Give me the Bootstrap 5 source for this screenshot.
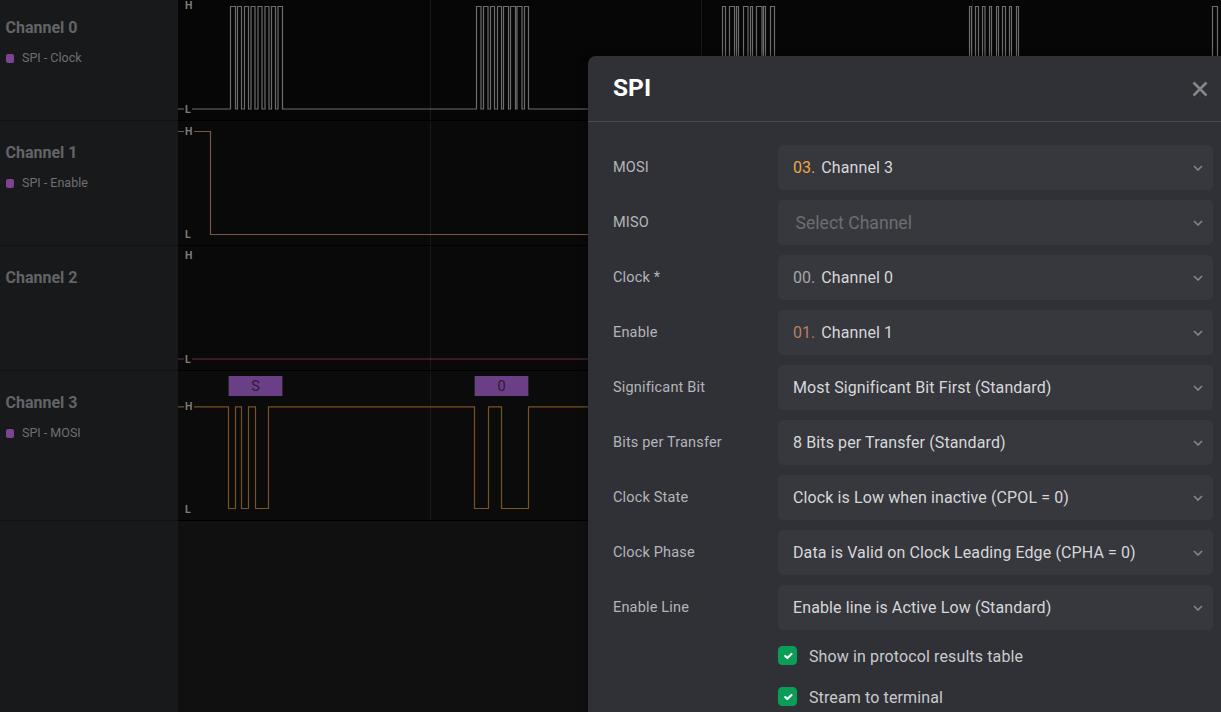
<!DOCTYPE html>
<html lang="en">
<head>
<meta charset="utf-8">
<title>SPI</title>
<link href="https://cdn.jsdelivr.net/npm/bootstrap@5.3.0/dist/css/bootstrap.min.css" rel="stylesheet">
<style>
html,body{height:712px;overflow:hidden}
body{background:#101010;font-family:Roboto,"Liberation Sans",sans-serif;color:#d0d1d3;position:relative}
.side-wrap{width:178px;flex:none;background:#18191b;height:712px}
.ch-row{height:125px;border-bottom:1px solid #111213;padding:22px 0 0 5.5px}
.ch-row.first{height:121px;padding-top:18px}
.ch-row.tall{height:150px}
.ch-name{font-size:16px;font-weight:700;line-height:20px;color:#636467}
.ch-sub{font-size:12.5px;line-height:16px;color:#6e6f72;margin-top:12px;gap:8px}
.ch-dot{width:8px;height:9px;border-radius:2px;background:#7b4391;flex:none;margin-left:.5px}
.chart-col{width:1043px;flex:none}
.chart-col svg{display:block}
.wave{fill:none;stroke-width:1.2}
.lv{font:700 10.5px Roboto,sans-serif;fill:#7c7c7c}
.tag{font:400 14.5px Roboto,sans-serif;fill:#2b1a36;text-anchor:middle}
.dlg{position:absolute;left:588px;top:56px;width:633px;height:656px;overflow:hidden;background:#303136;border-radius:8px 0 0 0;box-shadow:0 0 8px rgba(0,0,0,.4)}
.dlg-head{height:66px;border-bottom:1px solid #4b4c50;padding:0 25px}
.dlg-title{font-size:24.5px;font-weight:700;color:#fff;margin:0;line-height:1}
.dlg-close{background:none;border:0;padding:0;line-height:0;margin-right:-12px}
.dlg-body{padding:23px 8px 0 25px}
.fld{height:45px;margin-bottom:10px}
.fld-label{width:165px;flex:none;font-size:14.5px;letter-spacing:.17px;color:#b4b5b8;margin-top:1px}
.sel{width:435px;height:45px;background:#37383d;border-radius:5px;padding:0 10px 0 15px;font-size:16px;letter-spacing:.115px;color:#d6d7d9}
.sel .hint{color:#6c6d72;font-size:17.6px;letter-spacing:0;margin-left:2.5px;position:relative;top:1px}
.num{margin-right:6px;color:#a5a6a9;letter-spacing:0}
.num.c3{color:#eea647}
.num.c1{color:#b37f66}
.chk-row{margin-left:165px;height:19px;gap:12px;margin-bottom:22px;padding:0;min-height:0;font-size:16px;letter-spacing:.12px;color:#c9cacd}
.chk-row .form-check-input{float:none;margin:0;width:19px;height:19px;background-color:#0a9d58;border-color:#0a9d58;border-radius:4px;flex:none;background-size:14px}
.chk-row .form-check-label{line-height:19px;position:relative;top:1px}
</style>
</head>
<body>
<div class="d-flex">
  <div class="side-wrap">
    <div class="ch-row first">
      <div class="ch-name">Channel 0</div>
      <div class="ch-sub d-flex align-items-center"><span class="ch-dot"></span>SPI - Clock</div>
    </div>
    <div class="ch-row">
      <div class="ch-name">Channel 1</div>
      <div class="ch-sub d-flex align-items-center"><span class="ch-dot"></span>SPI - Enable</div>
    </div>
    <div class="ch-row">
      <div class="ch-name">Channel 2</div>
    </div>
    <div class="ch-row tall">
      <div class="ch-name">Channel 3</div>
      <div class="ch-sub d-flex align-items-center"><span class="ch-dot"></span>SPI - MOSI</div>
    </div>
  </div>
  <div class="chart-col">
    <svg width="1043" height="521" viewBox="178 0 1043 521">
      <rect x="178" y="0" width="1043" height="121" fill="#060606"/>
      <rect x="178" y="121" width="1043" height="125" fill="#090909"/>
      <rect x="178" y="246" width="1043" height="125" fill="#090909"/>
      <rect x="178" y="371" width="1043" height="150" fill="#0b0b0b"/>
      <path d="M430.5 0V521M701.5 0V521M972.5 0V521" stroke="#181818" fill="none"/>
      <path d="M178 120.5H1221M178 245.5H1221M178 370.5H1221M178 520.5H1221" stroke="#000" fill="none"/>
      <path class="wave" stroke="#6c6c6c" d="M178 109H230.5V6.5H235.5V109H237.5V6.5H241.5V109H244.5V6.5H248.5V109H251V6.5H255V109H258V6.5H262V109H265V6.5H269V109H271.5V6.5H275.5V109H278V6.5H282.5V109H476.5V6.5H481V109H483.5V6.5H488V109H490.5V6.5H494.5V109H497.5V6.5H501.5V109H503.5V6.5H508.5V109H510.5V6.5H515.5V109H517V6.5H522V109H524.5V6.5H528.5V109H722.5V6.5H725.5V109H729.5V6.5H734.5V109H736.5V6.5H738.5V109H743.5V6.5H748V109H750.5V6.5H752.5V109H756.5V6.5H762V109H763.5V6.5H765.5V109H770.5V6.5H774.5V109H969.5V6.5H971.5V109H975.5V6.5H978.5V109H982.5V6.5H985V109H989.5V6.5H991.5V109H996.5V6.5H998.5V109H1002.5V6.5H1005.5V109H1009.5V6.5H1011.5V109H1016.5V6.5H1018.5V109H1212.5V6.5H1217.5V109H1221"/>
      <path class="wave" stroke="#7a5645" d="M178 131.5H210.5V234.5H600"/>
      <path class="wave" stroke="#6a2f3e" d="M178 359H600"/>
      <path class="wave" stroke="#7a5325" d="M178 406.8H228.5V508.5H235.5V406.8H241.5V508.5H248.5V406.8H255.5V508.5H268.5V406.8H474.5V508.5H488.5V406.8H501.5V508.5H528.5V406.8H600"/>
      <rect x="228" y="376" width="55" height="20" fill="#27272a"/>
      <rect x="229" y="376" width="53" height="20" fill="#6b3f86"/>
      <rect x="474" y="376" width="55" height="20" fill="#27272a"/>
      <rect x="475" y="376" width="53" height="20" fill="#6b3f86"/>
      <text class="tag" x="255.5" y="391">S</text>
      <text class="tag" x="501.5" y="391">0</text>
      <g>
        <text class="lv" x="185" y="9">H</text>
        <rect x="184" y="105" width="8" height="9" fill="#060606"/><text class="lv" x="185" y="113">L</text>
        <rect x="184" y="126" width="10" height="10" fill="#090909"/><text class="lv" x="185" y="135">H</text>
        <text class="lv" x="185" y="238">L</text>
        <text class="lv" x="185" y="259">H</text>
        <rect x="184" y="355" width="8" height="9" fill="#090909"/><text class="lv" x="185" y="363">L</text>
        <rect x="184" y="402" width="10" height="10" fill="#0b0b0b"/><text class="lv" x="185" y="410">H</text>
        <text class="lv" x="185" y="513">L</text>
      </g>
    </svg>
  </div>
</div>

<div class="dlg">
  <div class="dlg-head d-flex align-items-center justify-content-between">
    <h5 class="dlg-title">SPI</h5>
    <button class="dlg-close" type="button" aria-label="Close">
      <svg width="16" height="16" viewBox="0 0 16 16"><path d="M1.5 1.5L14.5 14.5M14.5 1.5L1.5 14.5" stroke="#85868a" stroke-width="2.6" fill="none"/></svg>
    </button>
  </div>
  <div class="dlg-body">
    <div class="fld d-flex align-items-center"><div class="fld-label">MOSI</div><div class="sel d-flex align-items-center justify-content-between"><span><span class="num c3">03.</span>Channel 3</span><svg width="10" height="6" viewBox="0 0 10 6"><path d="M1 1L5 5L9 1" stroke="#85868a" stroke-width="1.6" fill="none"/></svg></div></div>
    <div class="fld d-flex align-items-center"><div class="fld-label">MISO</div><div class="sel d-flex align-items-center justify-content-between"><span class="hint">Select Channel</span><svg width="10" height="6" viewBox="0 0 10 6"><path d="M1 1L5 5L9 1" stroke="#85868a" stroke-width="1.6" fill="none"/></svg></div></div>
    <div class="fld d-flex align-items-center"><div class="fld-label">Clock *</div><div class="sel d-flex align-items-center justify-content-between"><span><span class="num">00.</span>Channel 0</span><svg width="10" height="6" viewBox="0 0 10 6"><path d="M1 1L5 5L9 1" stroke="#85868a" stroke-width="1.6" fill="none"/></svg></div></div>
    <div class="fld d-flex align-items-center"><div class="fld-label">Enable</div><div class="sel d-flex align-items-center justify-content-between"><span><span class="num c1">01.</span>Channel 1</span><svg width="10" height="6" viewBox="0 0 10 6"><path d="M1 1L5 5L9 1" stroke="#85868a" stroke-width="1.6" fill="none"/></svg></div></div>
    <div class="fld d-flex align-items-center"><div class="fld-label">Significant Bit</div><div class="sel d-flex align-items-center justify-content-between"><span>Most Significant Bit First (Standard)</span><svg width="10" height="6" viewBox="0 0 10 6"><path d="M1 1L5 5L9 1" stroke="#85868a" stroke-width="1.6" fill="none"/></svg></div></div>
    <div class="fld d-flex align-items-center"><div class="fld-label">Bits per Transfer</div><div class="sel d-flex align-items-center justify-content-between"><span>8 Bits per Transfer (Standard)</span><svg width="10" height="6" viewBox="0 0 10 6"><path d="M1 1L5 5L9 1" stroke="#85868a" stroke-width="1.6" fill="none"/></svg></div></div>
    <div class="fld d-flex align-items-center"><div class="fld-label">Clock State</div><div class="sel d-flex align-items-center justify-content-between"><span>Clock is Low when inactive (CPOL = 0)</span><svg width="10" height="6" viewBox="0 0 10 6"><path d="M1 1L5 5L9 1" stroke="#85868a" stroke-width="1.6" fill="none"/></svg></div></div>
    <div class="fld d-flex align-items-center"><div class="fld-label">Clock Phase</div><div class="sel d-flex align-items-center justify-content-between"><span>Data is Valid on Clock Leading Edge (CPHA = 0)</span><svg width="10" height="6" viewBox="0 0 10 6"><path d="M1 1L5 5L9 1" stroke="#85868a" stroke-width="1.6" fill="none"/></svg></div></div>
    <div class="fld d-flex align-items-center"><div class="fld-label">Enable Line</div><div class="sel d-flex align-items-center justify-content-between"><span>Enable line is Active Low (Standard)</span><svg width="10" height="6" viewBox="0 0 10 6"><path d="M1 1L5 5L9 1" stroke="#85868a" stroke-width="1.6" fill="none"/></svg></div></div>
    <div class="form-check chk-row d-flex align-items-center mt-3"><input class="form-check-input" type="checkbox" checked id="c1"><label class="form-check-label" for="c1">Show in protocol results table</label></div>
    <div class="form-check chk-row d-flex align-items-center"><input class="form-check-input" type="checkbox" checked id="c2"><label class="form-check-label" for="c2">Stream to terminal</label></div>
  </div>
</div>
<script src="https://cdn.jsdelivr.net/npm/bootstrap@5.3.0/dist/js/bootstrap.bundle.min.js"></script>
</body>
</html>
